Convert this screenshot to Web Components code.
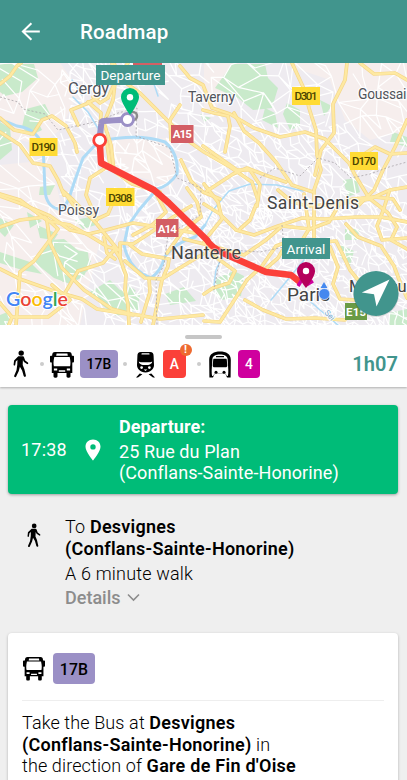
<!DOCTYPE html>
<html lang="en">
<head>
<meta charset="utf-8">
<title>Roadmap</title>
<style>
html,body{margin:0;height:100%;overflow:hidden;background:#efefef}
body{font-family:Roboto,"Liberation Sans",sans-serif;color:#000}
b{font-weight:600;letter-spacing:.25px}
</style>
</head>
<body>
<route-page>
  <app-bar slot="bar">Roadmap</app-bar>
  <route-map slot="map"></route-map>
  <trip-summary slot="summary" duration="1h07">
    <mode-icon kind="walk" style="--w:16px;--h:28px"></mode-icon><step-dot style="--l:11px"></step-dot>
    <mode-icon kind="bus" style="--w:24px;--h:27px"></mode-icon><line-badge style="--w:38px;--bg:#9b90c6;--gap:6px">17B</line-badge><step-dot style="--r:9px"></step-dot>
    <mode-icon kind="train" style="--w:19px;--h:27px"></mode-icon><line-badge alert style="--w:23px;--bg:#fb4039;--fg:#fff;--gap:8px">A</line-badge><step-dot style="--l:11px;--r:8px"></step-dot>
    <mode-icon kind="metro" style="--w:22px;--h:27px"></mode-icon><line-badge style="--w:22px;--bg:#cf009e;--fg:#fff;--gap:7px">4</line-badge>
  </trip-summary>
  <departure-card time="17:38"><span slot="title">Departure:</span>25 Rue du Plan<br>(Conflans-Sainte-Honorine)</departure-card>
  <walk-step><span>To <b>Desvignes<br>(Conflans-Sainte-Honorine)</b></span><span slot="length">A 6 minute walk</span><span slot="more">Details</span></walk-step>
  <transit-card>
    <mode-icon slot="head" kind="bus" style="--w:22px;--h:25px"></mode-icon><line-badge slot="head" style="--w:42px;--h:31px;--bg:#9b90c6;--gap:8px;--fs:15.8px">17B</line-badge>
    Take the Bus at <b>Desvignes<br>(Conflans-Sainte-Honorine)</b> in<br>the direction of <b>Gare de Fin d'Oise</b>
  </transit-card>
</route-page>
<script>
const define = (name, html, setup) => customElements.define(name, class extends HTMLElement {
  constructor() {
    super();
    const root = this.attachShadow({ mode: 'open' });
    const t = document.createElement('template');
    t.innerHTML = html;
    root.append(t.content.cloneNode(true));
    if (setup) setup(this, root);
  }
});

define('route-page', `<style>
:host{display:flex;flex-direction:column;width:100%;height:780px;overflow:hidden;background:#efefef}
main{display:flex;flex-direction:column;padding:18px 9px 0 8px}
</style><slot name="bar"></slot><slot name="map"></slot><slot name="summary"></slot><main><slot></slot></main>`);

define('app-bar', `<style>
:host{display:flex;align-items:center;height:63px;flex:none;box-sizing:border-box;padding-left:20px;gap:38px;background:#41958d;color:#fff;font-size:20.500px;font-weight:500;line-height:24px;letter-spacing:.1px}
svg{width:22px;height:22px}
span{padding-top:1px}
</style><svg viewBox="0 0 22 22" fill="none" stroke="#fff" stroke-width="2"><path d="M19.800 10.500H2.700M11.400 2.300 2.900 10.500l8.500 8.300"/></svg><span><slot></slot></span>`);

const icons = {
  walk: ['0 0 16 28', `<circle cx="8.2" cy="3.1" r="2.7"/><path d="M5.3 6.2h4.3c.8 0 1.2.5 1.5 1.3l1.1 3.1 2.7 2c.9.8 0 2-.9 1.4l-3-2-1.1-2-.2 5 1.7 4.2 1.500 6.400c.3 1.500-1.800 1.800-2.200.5l-1.600-5.700-2.200-3.700-1.100 4.200-2.600 5.700c-.6 1.300-2.400.5-2-.8l2.300-5.600.8-5.700.1-4.400-1.600 1.400-.6 3.400c-.2 1-1.700.9-1.600-.3l.5-4.200z"/>`],
  bus: ['0 0 24 27', `<path fill-rule="evenodd" d="M5 1h14c2 0 2.7 1 2.9 3.7h1.2c.6 0 .9.3.9.9v5c0 .7-.3 1-.9 1h-.8V22h-1.8v3.3c0 1-.6 1.4-1.5 1.4h-1c-1 0-1.5-.5-1.5-1.4V22h-9v3.3c0 .9-.5 1.4-1.5 1.4H5c-1 0-1.500-.5-1.500-1.400V22H1.800V11.600H.9c-.6 0-.9-.3-.9-1v-5c0-.6.3-.9.9-.9h1.200C2.300 2 3 1 5 1zm1.600 1.600-.4 2.100h11.600l-.4-2.100zM4.300 5.900c-1 4.200-.9 7.100-.4 9.300h16.200c.5-2.200.6-5.100-.4-9.300zM3.900 17.600v1.900h3.300v-1.900zm12.900 0v1.900h3.300v-1.900zM8.800 19.300v1.400h6.400v-1.400z"/>`],
  train: ['0 0 19 27', `<path fill-rule="evenodd" d="M5 1h9c2.600 0 3.600 1.500 3.600 4l.4 9.200c0 3.600-3.200 6.800-8.500 7.400C4.200 21 1 17.800 1 14.200L1.400 5C1.400 2.500 2.400 1 5 1zm1.200 1.200c-.5 0-.8.3-.8.7s.3.7.8.7h6.600c.5 0 .8-.3.8-.7s-.3-.7-.8-.7zM2.800 10.500c.3 2.800 2.900 3.600 6.700 3.600s6.400-.8 6.700-3.600c-1.800 1-4 .8-6.700.8s-4.900.2-6.700-.8zM4.200 16.600a1.400 1.400 0 1 0 2.800 0 1.400 1.400 0 0 0-2.800 0zm7.800 0a1.400 1.400 0 1 0 2.800 0 1.400 1.400 0 0 0-2.800 0zM7.700 18.500h3.600L9.500 20z"/><path d="m3.700 22.600-3.700 4h2l4.400-3.300zM15.300 22.600l3.700 4h-2l-4.400-3.300z"/>`],
  metro: ['0 0 22 27', `<path fill-rule="evenodd" d="M11 .5C17 .5 21.800 3 21.800 8.800l-.2 17.700h-4.400l-1.500-2.200H6.300l-1.500 2.200H.4L.2 8.800C.2 3 5 .5 11 .5zM3.400 7.700 2.700 19c0 2.600 0 4.400.5 6.100h1l1.100-2.400h11.400l1.100 2.400h1c.5-1.700.5-3.500.5-6.100l-.7-11.300C17.800 4.600 15.100 3.600 11 3.600S4.200 4.600 3.400 7.700zM7 4.900h8v1.300H7z"/><path fill="#fff" d="M5.500 22.900h11L18.200 27H3.800z"/><path d="M5.400 7.800h11.200c.9 0 1.200.4 1.200 1.200l.5 5.300c0 1.400-.5 2-1.900 2H5.600c-1.400 0-1.900-.6-1.900-2L4.200 9c0-.8.3-1.200 1.200-1.200z"/><circle cx="7" cy="21.200" r="1.500"/><circle cx="15" cy="21.200" r="1.500"/>`]
};
define('mode-icon', `<style>:host{display:block;flex:none;width:var(--w);height:var(--h)}svg{display:block;width:100%;height:100%}</style><svg></svg>`, (el, root) => {
  const [box, art] = icons[el.getAttribute('kind')];
  const svg = root.querySelector('svg');
  svg.setAttribute('viewBox', box);
  svg.innerHTML = art;
});

define('step-dot', `<style>:host{display:block;flex:none;width:4px;height:4px;border-radius:50%;background:#ccc;margin:0 var(--r,6px) 0 var(--l,5px)}</style>`);

define('line-badge', `<style>
:host{display:flex;position:relative;align-items:center;justify-content:center;flex:none;width:var(--w);height:var(--h,28px);margin-left:var(--gap);border-radius:4px;background:var(--bg);color:var(--fg,#000);font-size:var(--fs,13.800px);font-weight:500;line-height:1;letter-spacing:.15px}
span{padding-top:2px}
i{display:none;position:absolute;top:-6px;right:-5.500px;width:12px;height:12px;border-radius:50%;background:#ee6a30;color:#fff;font:700 11px/12px Roboto,sans-serif;text-align:center;letter-spacing:0}
:host([alert]) i{display:block}
</style><span><slot></slot></span><i>!</i>`);

define('trip-summary', `<style>
:host{display:flex;flex-direction:column;align-items:center;height:62px;flex:none;box-sizing:border-box;background:#fff;box-shadow:0 1px 2px #0004;padding-top:10px}
.grip{width:37px;height:4px;border-radius:2px;background:#c6c6c6}
.row{display:flex;align-items:center;width:100%;box-sizing:border-box;padding:11px 9px 0 13px}
.time{margin-left:auto;color:#41958d;font-size:20px;font-weight:600;line-height:28px;letter-spacing:.1px}
</style><div class="grip"></div><div class="row"><slot></slot><span class="time"></span></div>`, (el, root) => {
  root.querySelector('.time').textContent = el.getAttribute('duration');
});

define('departure-card', `<style>
:host{display:flex;align-items:center;height:89px;box-sizing:border-box;border-radius:4px;background:#00bc78;box-shadow:0 1px 3px #0005;color:#fff;font-size:18px;line-height:21.500px;padding-left:13px;letter-spacing:.09px}
time{width:64px;flex:none;font-weight:400;letter-spacing:.2px;padding-top:1px}
svg{width:16px;height:22px;flex:none;margin-right:18px}
.title{display:block;font-weight:700;margin-bottom:3px}
.text{padding-top:1px}
</style><time></time><svg viewBox="0 0 16 22"><path fill="#fff" fill-rule="evenodd" d="M8 .5C3.700.5.500 3.600.500 7.700.500 12.700 8 21.500 8 21.500s7.500-8.800 7.500-13.800C15.500 3.600 12.300.500 8 .500zm0 4.700a2.700 2.700 0 1 1 0 5.400 2.700 2.700 0 0 1 0-5.400z"/></svg><div class="text"><span class="title"><slot name="title"></slot></span><slot></slot></div>`, (el, root) => {
  root.querySelector('time').textContent = el.getAttribute('time');
});

define('walk-step', `<style>
:host{display:flex;height:139px;box-sizing:border-box;padding:22px 0 0 19px;font-size:18px;line-height:21.500px;font-weight:300;letter-spacing:.18px}
mode-icon{--w:14px;--h:25px;margin:7px 24px 0 0}
.text{display:flex;flex-direction:column;align-items:flex-start}
.len{margin-top:3.500px}
.more{display:flex;align-items:center;gap:6px;margin-top:3px;color:#8c8c8c;font-weight:500;letter-spacing:0}
svg{width:13px;height:9px}
</style><mode-icon kind="walk"></mode-icon><div class="text"><slot></slot><span class="len"><slot name="length"></slot></span><span class="more"><slot name="more"></slot><svg viewBox="0 0 13 9" fill="none" stroke="#8c8c8c" stroke-width="1.600"><path d="m1 1.500 5.500 5.500 5.500-5.500"/></svg></span></div>`);

define('transit-card', `<style>
:host{display:block;height:170px;box-sizing:border-box;padding:20px 14px 0;border-radius:4px;background:#fff;box-shadow:0 1px 3px #0004;font-size:18px;line-height:21.700px;font-weight:300;letter-spacing:.12px}
header{display:flex;align-items:center;height:48px;padding-left:1px;border-bottom:1px solid #eee;box-sizing:border-box;padding-bottom:16px;margin-bottom:11px}
</style><header><slot name="head"></slot></header><slot></slot>`);

define('map-tag', `<style>:host{display:flex;align-items:center;justify-content:center;box-sizing:border-box;background:#41958d;color:#fff;font-size:13.500px;letter-spacing:.1px;line-height:20px}</style><slot></slot>`);

define('route-map', `<style>
:host{display:block;position:relative;height:262px;flex:none;overflow:hidden}
svg{display:block;width:407px;height:262px}
text{font-family:Roboto,sans-serif}
map-tag{position:absolute}
.dep{left:96px;top:2px;width:69px;height:20px}
.arr{left:282px;top:175px;width:48px;height:21px}
.major{fill:none;stroke-linejoin:round;stroke-linecap:round}
.place{fill:#50535a;stroke:#fff;stroke-width:2.500px;stroke-opacity:.8;paint-order:stroke}
.shield{font-size:11.500px;font-weight:500;text-anchor:middle}
</style>
<svg viewBox="0 63 407 262">
<rect y="63" width="407" height="262" fill="#eeebf0"/>
<g fill="#f6eeed"><path d="M0 63H60L80 90 60 130 40 145 0 135zM280 63H407V130L370 140 345 120 330 80zM204 63H240L215 110 204 110zM0 165 50 160 60 200 100 240 80 325H0zM110 140 170 138 178 160 172 190 150 180 110 170z"/></g>
<g fill="#c9eacb">
<path d="M0 64H34L38 78 22 92 5 96 0 92zM26 109 45 104 50 114 38 122 42 130 30 136 22 127zM0 122 10 128 12 150 0 160z"/>
<path d="M215 88 232 64H265L268 78 278 88 272 108 253 110 238 98zM265 108 275 113 278 128 262 120zM287 103 300 110 300 126 290 130 283 114zM320 100 332 106 324 116zM393 132 407 137V147L390 142z"/>
<path d="M0 218 14 225 5 237 0 232zM27 212 42 221 30 228zM37 225 58 234 54 240 40 238zM0 252 30 262 42 274 22 270 0 263zM60 248 88 252 90 270 63 282 42 262z"/>
<path d="M49 240 64 239 80 252 91 261 84 276 70 284 54 278 34 262zM90 292 110 280 120 290 140 294 138 310 116 316 102 305zM165 294 184 287 196 301 170 305zM128 284 136 291 127 296z"/>
<path d="M217 278 234 271 244 276 241 296 222 300 213 290zM345 229 360 229 357 240 345 240zM341 245 354 251 350 266 340 257zM343 180 356 178 360 192 348 197zM40 187 55 185 50 195 39 195zM75 220 90 217 96 225 83 229zM389 313 407 309V325H389zM0 315 10 311 12 325H0zM200 114 211 118 204 122z"/>
</g>
<g id="streets" fill="none" stroke="#fff" stroke-linecap="round" stroke-linejoin="round"></g>
<g fill="none" stroke="#aedbf6" stroke-width="3" stroke-linecap="round" stroke-linejoin="round">
<path d="M99 130 97 143 83 158 75 180 70 195Q66 209 58 209 46 206 45 190L43 145Q35 128 17 126 8 122 0 120"/>
<path d="M99 141Q140 133 165 142 179 154 177 174 169 186 157 189L139 210 128 226 124 245Q129 270 151 278 162 270 164 258 174 243 195 237L205 225"/>
<path stroke-width="1.500" d="M73 97 88 112 99 130M205 225 213 210 229 191 250 184 277 185 303 191M304 296 320 310 338 325M223 255 216 270 214 285M271 300 304 260M72 80 82 95M154 84 158 96"/>
</g>
<g id="casing" class="major" stroke="#f5d789" stroke-width="3.700"></g>
<g id="core" class="major" stroke="#fee9a2" stroke-width="2.300"></g>
<g fill="none" stroke="#a9a5a9" stroke-width=".8" stroke-dasharray="2 2"><path d="M0 97 18 102 23 109 45 114 58 130 95 122 118 113 137 108 136 136 170 148 177 178 201 188 200 215 168 235 164 265 156 280 157 325"/><path d="M260 178 275 168 300 176 318 158 335 163 351 178 370 174 389 167 407 162M282 225 284 247 260 252 230 250 219 263 214 290M363 275 365 297"/></g>
<g class="place">
<text x="68" y="93.500" font-size="16.500" textLength="41">Cergy</text>
<text x="188" y="102" font-size="14" textLength="47">Taverny</text>
<text x="358" y="99" font-size="14" textLength="48.500">Goussai</text>
<text x="58" y="214.500" font-size="14" textLength="41">Poissy</text>
<text x="267" y="208.500" font-size="17.500" fill="#444" textLength="92">Saint-Denis</text>
<text x="287" y="301" font-size="19" fill="#444" textLength="43">Paris</text>
<text x="349" y="292" font-size="16.500" fill="#444" textLength="57.500">Montreu</text>
<text transform="translate(324 313) rotate(48)" font-size="8" fill="#74a6cf">Sei</text>
</g>
<rect x="133" y="60" width="29" height="6" fill="#d45f64"/>
<g class="shield" fill="#4b4300">
<rect x="292" y="87" width="28" height="18" fill="#ffdb35"/><text x="306" y="100" textLength="23">D301</text>
<rect x="350" y="152" width="28" height="18" fill="#ffdb35"/><text x="364" y="165" textLength="24">D170</text>
<rect x="29.500" y="138" width="28" height="18" fill="#ffdb35"/><text x="43.500" y="151" textLength="24">D190</text>
<rect x="106" y="188" width="28.500" height="18" fill="#ffdb35"/><text x="120.300" y="201.500" textLength="24">D308</text>
</g>
<g class="shield" fill="#fff" style="font-weight:700">
<rect x="171" y="125" width="22.500" height="18" fill="#d35d64"/><text x="182.300" y="138.300" textLength="19">A15</text>
<rect x="156" y="219" width="22.500" height="18" fill="#d35d64"/><text x="167.300" y="232.500" textLength="19">A14</text>
<rect x="345" y="303" width="22" height="17" fill="#6a9b45"/><text x="356" y="316" textLength="20">E15</text>
</g>
<circle cx="133" cy="116" r="4" fill="none" stroke="#8b8b8b" stroke-width="2.500"/>
<path d="M127 119.500 104 121Q101.500 121 101.300 124L99.500 140" fill="none" stroke="#9b90c6" stroke-width="6"/>
<path d="M99.700 141 101 163 154 190 169 203 207 240Q212 249 234 258L266 272 291 275 301 283" fill="none" stroke="#fb4039" stroke-width="6.500" stroke-linejoin="round"/>
<text x="171" y="259" font-size="18" textLength="70" class="place" style="fill:#444;stroke-width:1.500px;stroke-opacity:.6">Nanterre</text>
<circle cx="99.700" cy="140.300" r="6" fill="#fff" stroke="#fb4039" stroke-width="2.800"/>
<circle cx="127.500" cy="119.500" r="6" fill="#fff" stroke="#9b90c6" stroke-width="2.800"/>
<path d="m298 286 5-8 5 6 5-3" fill="none" stroke="#cf009e" stroke-width="3.500"/>
<g><path fill="#00bc78" d="M130 88a9 9 0 0 0-9 9c0 6 9 18 9 18s9-12 9-18a9 9 0 0 0-9-9z"/><circle cx="130" cy="97.200" r="3.200" fill="#fff"/>
<path fill="#b5005c" d="M306 262a9 9 0 0 0-9 9c0 6 9 17 9 17s9-11 9-17a9 9 0 0 0-9-9z"/><circle cx="306" cy="271" r="3.200" fill="#fff"/></g>
<path d="m324 282 3.500 6h-7z" fill="#4588ef"/><circle cx="324.300" cy="294" r="5.500" fill="#4588ef" stroke="#dce8fc" stroke-width=".7"/>
<g font-size="20" style="paint-order:stroke" stroke="#fff" stroke-width="2"><text x="6" y="305.500" textLength="62" lengthAdjust="spacingAndGlyphs" style="font-family:Lato,sans-serif;font-weight:600"><tspan fill="#4285f4">G</tspan><tspan fill="#ea4335">o</tspan><tspan fill="#fbbc05">o</tspan><tspan fill="#4285f4">g</tspan><tspan fill="#34a853">l</tspan><tspan fill="#ea4335">e</tspan></text></g>
<circle cx="376" cy="294.500" r="22.800" fill="#0002"/><circle cx="376" cy="293.500" r="22.500" fill="#41958d"/>
<path d="m389.500 279.500-13 27-2.500-12.300-12.200-1.700z" fill="#fff"/>
</svg>
<map-tag class="dep">Departure</map-tag><map-tag class="arr">Arrival</map-tag>`, (el, root) => {
  const ns = 'http://www.w3.org/2000/svg';
  const add = (id, d, w) => {
    const p = document.createElementNS(ns, 'path');
    p.setAttribute('d', d);
    if (w) p.setAttribute('stroke-width', w);
    root.getElementById(id).append(p);
  };
  // Main roads, in map coordinates.
  const roads = [
    'M0 84 10 76 17 66 21 63', 'M0 118 14 130 33 134 42 120 52 116 66 126 75 143 77 152',
    'M0 132 20 145 33 163 50 166 58 180 64 195', 'M114 63 120 79 140 93 167 120 187 140 204 152 230 167 252 182 258 200',
    'M128 63 116 80 108 98 100 103 93 97', 'M88 102 101 113 100 130 107 144 110 165 90 178 86 195 97 220',
    'M112 63 115 83 113 100 104 123 111 145 114 171 132 184 160 192',
    'M180 66 190 78 203 85 212 108 230 114 254 128 280 137 305 132 325 139 336 150 349 163 355 175 369 198 388 213 397 227 391 240 407 249',
    'M203 110 214 113 228 116 230 126 225 152', 'M234 113 244 131 259 143 276 162 292 185 313 192',
    'M203 146 217 156 237 170 250 170 260 185 257 206',
    'M292 63 305 91 309 108 316 130 317 155 321 170 314 190 314 240',
    'M347 63 345 80 333 104 334 133 321 150 315 175', 'M360 63 374 74 395 73 407 80',
    'M407 120 395 147 383 170 374 190 358 206', 'M355 160 375 147 390 154 407 153',
    'M0 194 20 200 48 221 70 225 90 236 108 247 120 250', 'M0 196 22 204 50 216 70 230 88 234 106 230 133 223 170 229 195 233',
    'M63 191 73 200 96 223 118 250 113 247 120 258 120 243 133 244 150 233 173 217 191 206',
    'M65 193 76 209 97 219 108 214 114 200', 'M0 227 20 220 45 217 58 229 46 245 34 261 20 272 16 325',
    'M47 221 50 243 62 268 84 290 112 309 132 314 160 319 203 315', 'M0 269 20 279 51 290 82 299 97 309 133 315',
    'M115 249 103 263 78 271 65 293', 'M120 258 124 270 126 275 125 290 128 305 129 325',
    'M130 245 142 254 169 259 168 266 162 280 158 300 153 325', 'M149 279 150 292 145 308 141 322', 'M125 261 145 278 162 279 178 269 203 254',
    'M12 317 48 317 70 300 52 285', 'M204 321 220 322 235 299 247 280 262 266 276 246 292 240 313 243 336 241 343 255 350 270 358 280 370 282',
    'M184 239 212 246 244 255 266 240 282 226 310 229 329 222 340 203 353 199 374 197 393 199 400 210',
    'M204 204 220 214 236 230 254 235 278 226 302 218 325 219 357 217 381 217 407 222',
    'M278 190 292 202 308 206 339 204 370 199 390 190 407 187', 'M304 194 309 229 301 242',
    'M389 192 383 211 377 226 382 240 407 238', 'M204 242 217 258 235 271 229 283 213 288 204 294',
    'M330 247 338 267 333 284 340 299 355 300', 'M256 205 250 220 240 229', 'M204 184 218 202 222 219 209 235',
    'M286 182 265 175 247 168 233 174 207 191', 'M346 224 358 237 381 246 394 266 400 282 407 298',
    'M262 272 278 258 287 243', 'M245 300 263 310 286 319 315 318 345 320', 'M181 160 191 181 203 192 220 199',
    'M171 140 170 120 180 105', 'M78 125 71 110 86 104 99 97', 'M0 303 12 317 9 325', 'M187 188 197 202 201 217 182 232 167 253', 'M104 237 107 253 115 259', 'M154 190 166 212 152 225 133 235'
  ];
  roads.forEach(d => { add('casing', d); add('core', d); });
  // Local street mesh: a jittered grid whose density rises towards the city.
  let seed = 73;
  const rnd = () => (seed = (seed * 16807) % 2147483647) / 2147483647;
  const mesh = (x0, y0, x1, y1, step, keep, width) => {
    const cols = Math.ceil((x1 - x0) / step), rows = Math.ceil((y1 - y0) / step), pts = [];
    for (let r = 0; r <= rows; r++) for (let c = 0; c <= cols; c++)
      pts.push([(x0 + (c + (rnd() - .5) * .9) * step).toFixed(1), (y0 + (r + (rnd() - .5) * .9) * step).toFixed(1)]);
    let d = '';
    for (let r = 0; r < rows; r++) for (let c = 0; c < cols; c++) {
      const i = r * (cols + 1) + c;
      for (const j of [i + 1, i + cols + 1, i + cols + 2])
        if (rnd() < keep) d += `M${pts[i]}L${pts[j]}`;
    }
    add('streets', d, width);
  };
  mesh(0, 63, 66, 325, 16, .55, 1.2);
  mesh(64, 63, 125, 180, 9, .6, 1.3);
  mesh(64, 180, 130, 325, 13, .55, 1.3);
  mesh(125, 63, 210, 230, 11, .6, 1.3);
  mesh(130, 215, 215, 325, 8, .6, 1.3);
  mesh(205, 125, 345, 215, 8.5, .62, 1.3);
  mesh(210, 63, 407, 130, 17, .5, 1.2);
  mesh(345, 120, 407, 200, 14, .55, 1.3);
  mesh(215, 205, 407, 325, 6.5, .62, 1.2);
});
</script>
</body>
</html>
